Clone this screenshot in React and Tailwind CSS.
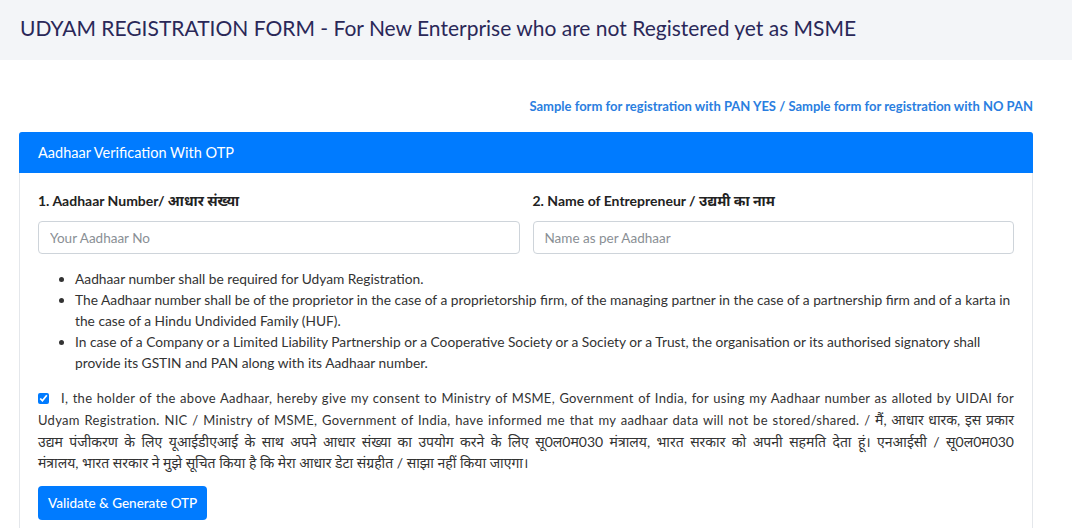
export default function App() {
  const line = "block text-justify [text-align-last:justify]";
  return (
    <div className="min-h-[528px] bg-white font-['Lato','Noto_Sans',sans-serif]">
      <div className="h-[60px] bg-[#f3f5f8] flex items-center px-[20px] pb-[5px]">
        <h1 className="text-[21px] text-[#2a2858] leading-none">
          UDYAM REGISTRATION FORM - For New Enterprise who are not Registered yet as MSME
        </h1>
      </div>
      <div className="pl-[19px] pr-[39px] pt-[38px]">
        <div className="flex justify-end">
          <p className="text-[13px] font-bold text-[#2a7ee0] leading-[16px]">
            <span>Sample form for registration with PAN YES</span>
            <span> / </span>
            <span>Sample form for registration with NO PAN</span>
          </p>
        </div>
        <div className="mt-[18px] border border-[#e4e7eb] rounded-t-[4px]">
          <div className="h-[41px] bg-[#007bff] rounded-t-[3px] flex items-center px-[19px] -mx-px -mt-px">
            <span className="text-white text-[14.5px]">Aadhaar Verification With OTP</span>
          </div>
          <div className="px-[18px] pt-[20px] pb-[20px]">
            <div className="grid grid-cols-2 gap-[13px]">
              <div>
                <label className="block text-[14px] font-bold text-[#222] leading-[16px]">
                  1. Aadhaar Number/ आधार संख्या
                </label>
                <input
                  className="mt-[12px] w-full h-[33px] border border-[#ced4da] rounded-[4px] px-[11px] text-[13.5px] placeholder-[#8a8f95] outline-none"
                  placeholder="Your Aadhaar No"
                />
              </div>
              <div>
                <label className="block text-[14px] font-bold text-[#222] leading-[16px]">
                  2. Name of Entrepreneur / उद्यमी का नाम
                </label>
                <input
                  className="mt-[12px] w-full h-[33px] border border-[#ced4da] rounded-[4px] px-[11px] text-[13.5px] placeholder-[#8a8f95] outline-none"
                  placeholder="Name as per Aadhaar"
                />
              </div>
            </div>
            <ul className="mt-[14px] pl-[37px] list-disc text-[13.75px] leading-[21px] text-[#333]">
              <li>Aadhaar number shall be required for Udyam Registration.</li>
              <li>
                The Aadhaar number shall be of the proprietor in the case of a proprietorship firm, of the managing partner in the case of a partnership firm and of a karta in the case of a Hindu Undivided Family (HUF).
              </li>
              <li>
                In case of a Company or a Limited Liability Partnership or a Cooperative Society or a Society or a Trust, the organisation or its authorised signatory shall provide its GSTIN and PAN along with its Aadhaar number.
              </li>
            </ul>
            <div className="mt-[15px] text-[13px] leading-[21px] text-[#333] tracking-[0.3px]">
              <span className={line}>
                <input type="checkbox" defaultChecked className="w-[11px] h-[11px] align-[-1px] mr-[12px] accent-[#007bff]" />
                I, the holder of the above Aadhaar, hereby give my consent to Ministry of MSME, Government of India, for using my Aadhaar number as alloted by UIDAI for
              </span>
              <span className={line}>
                Udyam Registration. NIC / Ministry of MSME, Government of India, have informed me that my aadhaar data will not be stored/shared. / <span className="text-[14px] tracking-normal">मैं, आधार धारक, इस प्रकार</span>
              </span>
              <span className={line + " text-[14px] tracking-normal"}>
                उद्यम पंजीकरण के लिए यूआईडीएआई के साथ अपने आधार संख्या का उपयोग करने के लिए सू0ल0म030 मंत्रालय, भारत सरकार को अपनी सहमति देता हूं। एनआईसी / सू0ल0म030
              </span>
              <span className="block text-[14px] tracking-normal">
                मंत्रालय, भारत सरकार ने मुझे सूचित किया है कि मेरा आधार डेटा संग्रहीत / साझा नहीं किया जाएगा।
              </span>
            </div>
            <button className="mt-[13px] h-[34px] px-[10px] bg-[#007bff] text-white text-[13.5px] font-medium rounded-[4px]">
              Validate &amp; Generate OTP
            </button>
          </div>
        </div>
      </div>
    </div>
  );
}
